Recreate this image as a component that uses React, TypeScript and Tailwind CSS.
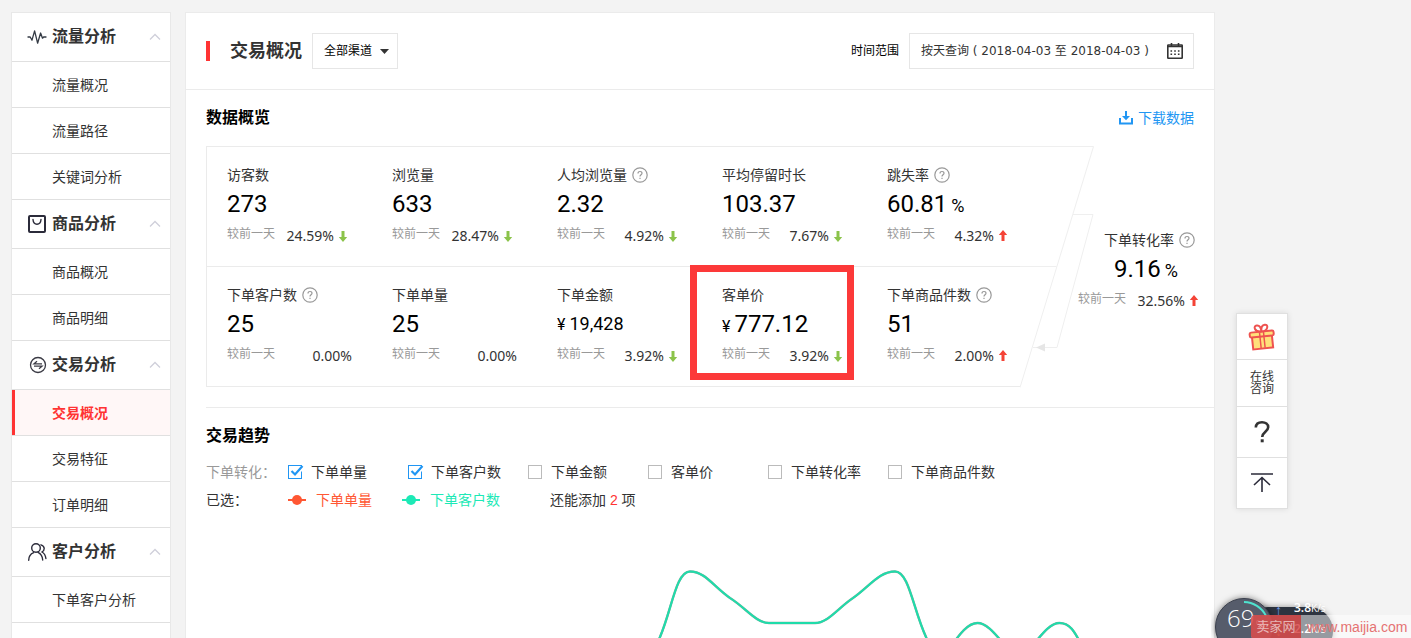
import React, { useState } from "react";

type IconProps = { className?: string };

const PulseIcon = ({ className }: IconProps) => (
  <svg className={className} viewBox="0 0 20 18" fill="none" stroke="#333a44" strokeWidth="1.3" strokeLinejoin="round" strokeLinecap="round">
    <path d="M1 9h2.2L5 12.2 7.6 2.8l3 12.4L13.6 5l1.9 5.2L16.6 9H19" />
  </svg>
);
const BagIcon = ({ className }: IconProps) => (
  <svg className={className} viewBox="0 0 20 18" fill="none" stroke="#2b2b3a" strokeWidth="2">
    <rect x="2" y="1" width="16" height="16" rx="1" />
    <path d="M6 4.5c.2 3.1 1.800 4.700 4 4.700s3.800-1.600 4-4.700" strokeWidth="1.400" strokeLinecap="round" />
  </svg>
);
const ExchangeIcon = ({ className }: IconProps) => (
  <svg className={className} viewBox="0 0 20 18" fill="none" stroke="#3a3a44" strokeWidth="1.300">
    <circle cx="11" cy="9" r="7.500" />
    <path d="M15 7.800H7l3-2.600M7 10.200h8l-3 2.600" />
  </svg>
);
const UsersIcon = ({ className }: IconProps) => (
  <svg className={className} viewBox="0 0 20 18" fill="none" stroke="#2b2b3a" strokeWidth="1.400" strokeLinecap="round">
    <circle cx="9" cy="5" r="4.300" />
    <path d="M1.700 17.200c0-4 1.800-6.200 5-7.500M11 9.300c3 1.400 4.500 3.900 4.700 7.700M14 1.800c2.200.7 3.200 2 3.200 3.700S16.400 8.200 15 9c2.200 1.200 3.500 3.300 3.900 6.500" />
  </svg>
);
const ChevronUp = ({ className }: IconProps) => (
  <svg className={className} viewBox="0 0 12 8" fill="none" stroke="#cfcfda" strokeWidth="1.300">
    <path d="M1 6.500 6 1.500l5 5" />
  </svg>
);
const HelpMark = () => (
  <svg className="h-4 w-4 shrink-0" viewBox="0 0 16 16" fill="none" stroke="#999" strokeWidth="1.200">
    <circle cx="8" cy="8" r="7.200" />
    <path d="M6 6.500c0-1.300.9-2 2-2s2 .7 2 1.800c0 1.500-2 1.500-2 3.200" />
    <path d="M8 10.700v1.300" />
  </svg>
);
const Arrow = ({ up }: { up: boolean }) => (
  <svg className={up ? "h-3 w-2.5 rotate-180" : "h-3 w-2.5"} viewBox="0 0 10 12">
    <path d="M3.500 1h3v6H9.200L5 12 .8 7h2.700z" fill={up ? "#f44336" : "#8bc34a"} />
  </svg>
);
const CalendarIcon = () => (
  <svg className="h-[18px] w-[18px]" viewBox="0 0 18 18" fill="none" stroke="#333" strokeWidth="1.600">
    <rect x="1.800" y="3" width="14.400" height="13.200" rx="0.500" />
    <path d="M1.800 4.500h14.400M5.500 1v4M12.500 1v4" />
    <path d="M4.500 9h1.600M8.200 9h1.600M11.900 9h1.600M4.500 12.300h1.600M8.200 12.300h1.600M11.900 12.300h1.600" />
  </svg>
);

const menu = [
  { name: "流量分析", icon: PulseIcon, items: ["流量概况", "流量路径", "关键词分析"] },
  { name: "商品分析", icon: BagIcon, items: ["商品概况", "商品明细"] },
  { name: "交易分析", icon: ExchangeIcon, items: ["交易概况", "交易特征", "订单明细"] },
  { name: "客户分析", icon: UsersIcon, items: ["下单客户分析", "支付客户分析"] },
];

function Sidebar({ current }: { current: string }) {
  return (
    <nav className="w-40 shrink-0 self-start border border-[#e8e8e8] bg-white">
      {menu.map(({ name, icon: Icon, items }) => (
        <section key={name}>
          <button type="button" className="flex h-[49px] w-full items-center border-b border-[#e0e0e0] pr-[9px] pl-[15px] text-base font-bold text-[#333]">
            <Icon className="mr-[5px] h-[18px] w-5" />
            {name}
            <ChevronUp className="ml-auto h-2 w-3" />
          </button>
          <ul>
            {items.map((item) => (
              <li key={item} className="border-b border-[#e0e0e0]">
                <a
                  href="#"
                  className={
                    item === current
                      ? "flex h-[45px] items-center border-l-[3px] border-[#ff3333] bg-[#fff7f7] pl-[37px] font-bold text-[#ff3333]"
                      : "flex h-[45px] items-center pl-10"
                  }
                >
                  {item}
                </a>
              </li>
            ))}
          </ul>
        </section>
      ))}
    </nav>
  );
}

type Stat = {
  label: string;
  value: string;
  prefix?: string;
  suffix?: string;
  change: string;
  trend?: "up" | "down";
  help?: boolean;
  small?: boolean;
  marked?: boolean;
};

const traffic: Stat[] = [
  { label: "访客数", value: "273", change: "24.59%", trend: "down" },
  { label: "浏览量", value: "633", change: "28.47%", trend: "down" },
  { label: "人均浏览量", value: "2.32", change: "4.92%", trend: "down", help: true },
  { label: "平均停留时长", value: "103.37", change: "7.67%", trend: "down" },
  { label: "跳失率", value: "60.81", suffix: "%", change: "4.32%", trend: "up", help: true },
];
const orders: Stat[] = [
  { label: "下单客户数", value: "25", change: "0.00%", help: true },
  { label: "下单单量", value: "25", change: "0.00%" },
  { label: "下单金额", value: "19,428", prefix: "¥", change: "3.92%", trend: "down", small: true },
  { label: "客单价", value: "777.12", prefix: "¥", change: "3.92%", trend: "down", marked: true },
  { label: "下单商品件数", value: "51", change: "2.00%", trend: "up", help: true },
];

const Title = ({ stat }: { stat: Stat }) => (
  <div className="flex h-6 items-center gap-[5px] whitespace-nowrap">
    {stat.label}
    {stat.help && <HelpMark />}
  </div>
);
const Value = ({ stat }: { stat: Stat }) => (
  <div className="flex h-[34px] items-baseline gap-1 font-['Liberation_Sans_Narrow','Roboto',sans-serif] leading-[34px] text-black">
    {stat.prefix && <span className="text-base leading-[34px]">{stat.prefix}</span>}
    <span className={stat.small ? "text-lg leading-[34px]" : "text-2xl leading-[34px]"}>{stat.value}</span>
    {stat.suffix && <span className="text-lg leading-[34px]">{stat.suffix}</span>}
  </div>
);
const Change = ({ stat }: { stat: Stat }) => (
  <div className="flex h-[30px] w-[125px] items-center justify-between whitespace-nowrap">
    <span className="pb-1 text-xs text-[#999]">较前一天</span>
    <span className="flex items-center gap-1 font-['Noto_Sans',sans-serif]">
      {stat.change}
      {stat.trend && (
        <span className="pr-1">
          <Arrow up={stat.trend === "up"} />
        </span>
      )}
    </span>
  </div>
);

function StatRow({ stats }: { stats: Stat[] }) {
  return (
    <div className="grid grid-cols-[165fr_165fr_165fr_165fr_133fr] border-b border-[#ebebeb] pt-4 pb-[15px] pl-5">
      {stats.map((s) => (
        <div key={s.label} className="relative min-w-0">
          <Title stat={s} />
          <Value stat={s} />
          <Change stat={s} />
          {s.marked && <span className="pointer-events-none absolute -top-[18px] -left-8 h-[115px] w-[164px] border-[7px] border-[#fc3939]" />}
        </div>
      ))}
    </div>
  );
}

function Overview() {
  const conversion: Stat = { label: "下单转化率", value: "9.16", suffix: "%", change: "32.56%", trend: "up", help: true };
  return (
    <section className="pr-3.5 pl-5">
      <header className="flex h-14 items-center justify-between pr-1.5">
        <h2 className="text-base font-bold text-black">数据概览</h2>
        <a href="#" className="flex items-center gap-1 text-[#2196f3]">
          <svg className="h-4 w-4" viewBox="0 0 16 16" fill="none" stroke="#2196f3" strokeWidth="2">
            <path d="M2 8v5.500h12V8" />
            <path d="M8 1v6" />
            <path d="M4 6h8L8 10.200z" fill="#2196f3" stroke="none" />
          </svg>
          下载数据
        </a>
      </header>
      <div className="flex">
        <div className="flex-1 border-t border-l border-[#ebebeb]">
          <StatRow stats={traffic} />
          <StatRow stats={orders} />
        </div>
        <div className="relative w-[180px] shrink-0 pt-[82px] pl-[58px]">
          <svg className="absolute top-0 left-0 h-[242px] w-[76px]" viewBox="0 0 76 242" fill="none" stroke="#efefef">
            <path d="M0 .5h73.500L0 241.500M0 120.500h36.500" />
            <path d="M53 68.500h20L37 201.500H13" />
            <path d="M16 201.500l9-4v8z" fill="#e6e6e6" stroke="none" />
          </svg>
          <div className="relative">
            <div className="pl-[26px]">
              <Title stat={conversion} />
            </div>
            <div className="pl-9">
              <Value stat={conversion} />
            </div>
            <Change stat={conversion} />
          </div>
        </div>
      </div>
    </section>
  );
}

const metrics = ["下单单量", "下单客户数", "下单金额", "客单价", "下单转化率", "下单商品件数"];

const Legend = ({ color, label }: { color: string; label: string }) => (
  <span className="flex items-center gap-2.5" style={{ color }}>
    <svg className="h-3 w-[18px]" viewBox="0 0 18 12" fill={color}>
      <path d="M0 5h18v2H0z" />
      <circle cx="9" cy="6" r="5" />
    </svg>
    {label}
  </span>
);

const curve =
  "M440 130 C446 118 449 118 454 106 C466 78 470 40.500 484 40.500 C499 40.500 507 55 524 67 C540 77 550 92 563 92 H609 C622 92 632 77 647 67 C664 55 673 40.500 689 40.500 C703 40.500 707 78 720 106 C724 116 728 126 734 126 C742 126 755 92 771.500 92 C787 92 801 124 813 124 C825 124 838 92 853.500 92 C869 92 872 112 882 124";

function Trend() {
  const [picked, setPicked] = useState(["下单单量", "下单客户数"]);
  const toggle = (m: string) => setPicked((p) => (p.includes(m) ? p.filter((x) => x !== m) : [...p, m]));
  return (
    <section className="mt-5 ml-5 border-t border-[#ebebeb] pr-5">
      <h2 className="flex h-14 items-center text-base font-bold text-black">交易趋势</h2>
      <div className="flex h-4 items-center">
        <span className="w-[82px] text-[#999]">下单转化：</span>
        {metrics.map((m) => (
          <label key={m} className="flex w-[120px] items-center gap-[9px] whitespace-nowrap">
            <span className="relative flex h-3.5 w-3.5">
              <input
                type="checkbox"
                checked={picked.includes(m)}
                onChange={() => toggle(m)}
                className="peer h-3.5 w-3.5 appearance-none border border-[#bbb] bg-white checked:border-[#2196f3]"
              />
              <svg className="pointer-events-none absolute top-0 left-0 hidden h-3.5 w-4 peer-checked:block" viewBox="0 0 16 14" fill="none">
                <path d="M13 2.500v4" stroke="#fff" strokeWidth="2" />
                <path d="M3.500 6 7 9.500 14.500 1" stroke="#2196f3" strokeWidth="2.200" />
              </svg>
            </span>
            {m}
          </label>
        ))}
      </div>
      <div className="mt-3 flex h-4 items-center">
        <span className="w-[82px]">已选：</span>
        <Legend color="#ff5733" label="下单单量" />
        <span className="w-[30px]" />
        <Legend color="#1de9b6" label="下单客户数" />
        <span className="pl-[50px]">
          还能添加 <span className="text-[#ff3333]">2</span> 项
        </span>
      </div>
      <svg className="mt-[23px] block w-full" viewBox="0 0 988 160" fill="none">
        <path d={curve} stroke="#8aa79c" strokeWidth="2.400" />
        <path d={curve} stroke="#1fdcaa" strokeWidth="2" />
      </svg>
    </section>
  );
}

function Tools() {
  const cell = "flex w-full items-center justify-center border-b border-[#e0e0e0] last:border-b-0";
  return (
    <aside className="absolute top-[313px] left-[1236px] w-[52px] border border-[#e0e0e0] bg-white shadow-[0_0_6px_rgba(0,0,0,0.1)]">
      <button type="button" aria-label="礼物" className={`${cell} h-[46px]`}>
        <svg className="h-7 w-7 -rotate-6" viewBox="0 0 28 28" fill="#ffe07a" stroke="#ee5350" strokeWidth="2">
          <path d="M4 13h20v12.500H4z" />
          <rect x="2" y="8.500" width="24" height="5" rx="1.500" />
          <path d="M14 8.500c-7 0-8-6.500-4-6.500 3 0 4 3.500 4 6.500zM14 8.500c7 0 8-6.500 4-6.500-3 0-4 3.500-4 6.500z" fill="#fff" />
          <path d="M12 9v16M16 9v16" strokeWidth="1.500" />
        </svg>
      </button>
      <button type="button" className={`${cell} h-[47px] text-xs leading-3`}>
        在线
        <br />
        咨询
      </button>
      <button type="button" aria-label="帮助" className={`${cell} h-[51px]`}>
        <svg className="h-6 w-5" viewBox="0 0 20 24" fill="none" stroke="#333" strokeWidth="2.600">
          <path d="M3.800 7.500C4 4 6.500 2.300 10 2.300s6.200 1.800 6.200 5c0 4.200-6 4.700-6 9.700" />
          <path d="M10.200 19.300v3" strokeWidth="3" />
        </svg>
      </button>
      <button type="button" aria-label="返回顶部" className={`${cell} h-[50px]`}>
        <svg className="h-5 w-[22px]" viewBox="0 0 22 20" fill="none" stroke="#2b2b3a" strokeWidth="1.600">
          <path d="M0 1h22M11 19V4.500M3 12l8-7.500 8 7.500" />
        </svg>
      </button>
    </aside>
  );
}

function NetMeter() {
  return (
    <div className="absolute right-0 bottom-0 h-12 w-[200px] overflow-hidden">
      <div className="absolute top-[17px] left-[33px] h-12 w-[89px] rounded-full bg-[#2d3440] shadow-[0_0_6px_rgba(0,0,0,0.4)]" />
      <div className="absolute top-2 left-1 h-[58px] w-[58px] rounded-full border border-[#3c414e] bg-[#565c6b] shadow-[0_0_6px_rgba(0,0,0,0.5)]" />
      <svg className="absolute top-2 left-1 h-[58px] w-[58px]" viewBox="0 0 58 58" fill="none" strokeWidth="2">
        <path d="M29 4a25 25 0 0 1 22 14" stroke="#4fe3cf" />
      </svg>
      <span className="absolute top-3 left-4 font-['Open_Sans',sans-serif] text-2xl font-light text-white">69</span>
      <span className="absolute top-7 left-[45px] text-[10px] text-white">%</span>
      <span className="absolute top-2.5 left-[64px] text-sm text-[#6f9df0]">↑</span>
      <span className="absolute top-[31px] left-[64px] text-sm text-[#d98b2b]">↓</span>
      <span className="absolute top-2.5 left-[83px] font-['Open_Sans',sans-serif] text-xs leading-4 font-semibold text-white">
        3.8<span className="text-[10px] font-normal">K/s</span>
      </span>
      <span className="absolute top-[31px] left-[83px] font-['Open_Sans',sans-serif] text-xs leading-4 font-semibold text-white">
        2.2<span className="text-[10px] font-normal">K/s</span>
      </span>
      <div className="absolute top-[25px] right-0 flex h-6 w-40 items-center overflow-hidden rounded-l bg-white/50">
        <span className="flex h-full w-[50px] items-center justify-center bg-[#d32f2f]/75 text-[13px] text-white/60">卖家网</span>
        <a href="#" className="pl-1.5 font-['Liberation_Sans',sans-serif] text-sm whitespace-nowrap text-[#e57373]">
          www.maijia.com
        </a>
      </div>
    </div>
  );
}

export default function App() {
  return (
    <div className="relative h-screen overflow-hidden bg-[#f3f3f3] font-['Liberation_Sans','Noto_Sans_CJK_SC',sans-serif] text-sm text-[#333]">
      <div className="flex gap-3.5 pt-3 pr-[196px] pl-[11px]">
        <Sidebar current="交易概况" />
        <main className="min-w-0 flex-1 border border-[#ebebeb] bg-white">
          <header className="flex h-[77px] items-center border-b border-[#ebebeb] px-5">
            <span className="mr-5 h-5 w-1 bg-[#ff3333]" />
            <h1 className="mr-2.5 text-lg font-bold">交易概况</h1>
            <label className="relative flex items-center">
              <select aria-label="渠道" className="h-9 w-[86px] appearance-none border border-[#e6e6e6] bg-white pl-[11px] text-xs text-black">
                <option>全部渠道</option>
              </select>
              <svg className="pointer-events-none absolute right-[9px] h-[5px] w-[9px]" viewBox="0 0 9 5" fill="#333">
                <path d="M0 0h9L4.500 5z" />
              </svg>
            </label>
            <label htmlFor="range" className="mr-2.5 ml-auto text-xs text-black">
              时间范围
            </label>
            <div className="flex h-9 w-[285px] items-center justify-between border border-[#e6e6e6] pr-[9px] pl-[11px]">
              <input
                id="range"
                readOnly
                value="按天查询 ( 2018-04-03 至 2018-04-03 )"
                className="w-60 font-['DejaVu_Sans','Noto_Sans_CJK_SC',sans-serif] text-xs outline-none"
              />
              <button type="button" aria-label="选择日期">
                <CalendarIcon />
              </button>
            </div>
          </header>
          <Overview />
          <Trend />
        </main>
      </div>
      <Tools />
      <NetMeter />
    </div>
  );
}
